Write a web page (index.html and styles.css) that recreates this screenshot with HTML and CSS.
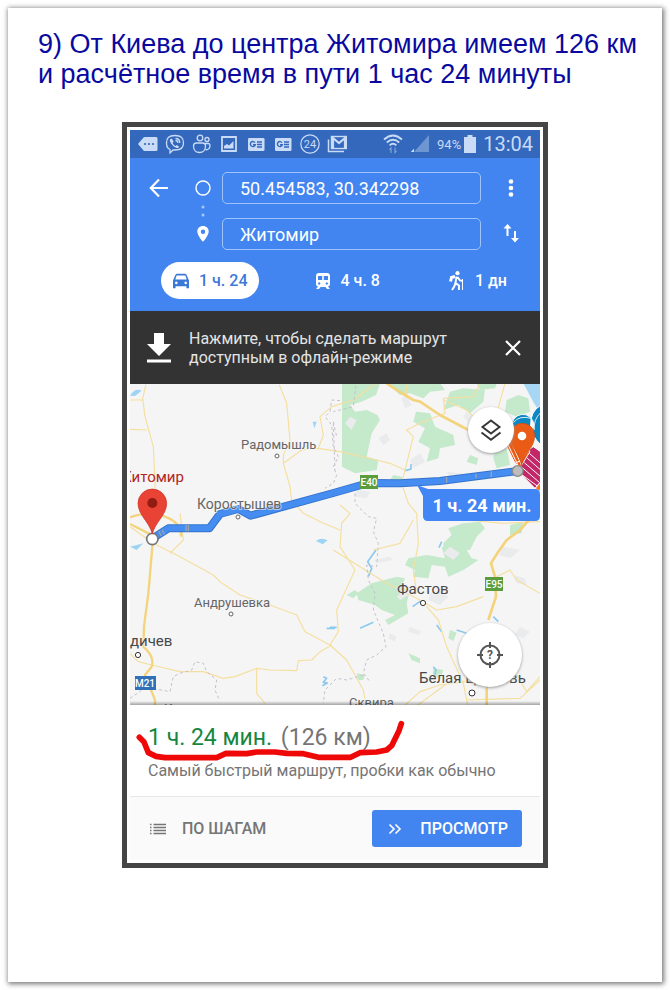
FILE: index.html
```html
<!DOCTYPE html>
<html lang="ru">
<head>
<meta charset="utf-8">
<meta name="viewport" content="width=device-width, initial-scale=1">
<title>Маршрут Киев — Житомир</title>
<link rel="stylesheet" href="styles.css">
</head>
<body>
<main class="sheet">
  <h1 class="title">9) От Киева до центра Житомира имеем 126 км и расчётное время в пути 1 час 24 минуты</h1>

  <section class="phone">
    <div class="status">
      <div class="status-icons">
        <svg class="ico20" viewBox="0 0 20 20"><path d="M0 10 5.500 3.500Q6 3 7 3H18Q19.500 3 19.500 4.500V15.500Q19.500 17 18 17H7Q6 17 5.500 16.500Z" fill="currentColor"/><g fill="#3368bd"><circle cx="7" cy="10" r="1.100"/><circle cx="11" cy="10" r="1.100"/><circle cx="15" cy="10" r="1.100"/></g></svg>
        <svg class="ico20" viewBox="0 0 20 20" fill="none" stroke="currentColor" stroke-width="1.300"><path d="M10 1.500C4 1.500 1.500 3.500 1.500 9c0 3.500 1 5.500 3.500 6.500V19l3-3h2c6 0 8.500-2 8.500-7S16 1.500 10 1.500Z"/><path d="M6 4.700c-1 .5-1.500 1.300-1 2.500 1 3 3.500 5.600 6.800 6.900 1 .3 2-.3 2.300-1.400l-2.300-1.700-1.200 1c-1.300-.5-2.500-1.800-3-3.200l1-1.100L7 4.700Z" fill="currentColor" stroke="none"/><path d="M10.500 4.500c2.500 0 4.300 1.800 4.300 4.500M10.500 6.500c1.500 0 2.400 1 2.400 2.500"/></svg>
        <svg class="ico20" viewBox="0 0 20 20" fill="none" stroke="currentColor" stroke-width="1.300"><circle cx="8" cy="4" r="2.800"/><circle cx="15" cy="5.500" r="2"/><path d="M1.500 12Q1.500 9 4.500 9h6q3 0 3 3c0 4-2.500 6.500-6 6.500S1.500 16 1.500 12ZM12.500 9.500h3.500q2 0 2 2c0 2.500-1.500 4.500-4.500 4.200"/></svg>
        <svg class="ico20" viewBox="0 0 20 20"><path d="M3 3H17V17H3Z" fill="none" stroke="currentColor" stroke-width="1.800"/><path d="M5 14.500V12l3-2 2 1.500L14.500 7v7.500Z" fill="currentColor"/></svg>
        <svg class="ico20" viewBox="0 0 20 20"><rect x="2" y="4" width="16.500" height="13" rx="1.200" fill="currentColor"/><g fill="none" stroke="#3368bd" stroke-width="1.400"><path d="M9 8.700A2.500 2.500 0 1 0 9.300 10.800H7M11 8h5M11 10.500h5M11 13h5"/></g></svg>
        <svg class="ico20" viewBox="0 0 20 20"><rect x="2" y="4" width="16.500" height="13" rx="1.200" fill="currentColor"/><g fill="none" stroke="#3368bd" stroke-width="1.400"><path d="M9 8.700A2.500 2.500 0 1 0 9.300 10.800H7M11 8h5M11 10.500h5M11 13h5"/></g></svg>
        <svg class="ico20" viewBox="0 0 20 20"><circle cx="10" cy="10" r="9.200" fill="none" stroke="currentColor" stroke-width="1.200"/><text class="badge24" x="10" y="14">24</text></svg>
        <svg class="ico20" viewBox="0 0 20 20" fill="none" stroke="currentColor"><path d="M1.500 5.500V17.500H17" stroke-width="1.500"/><rect x="4.500" y="2.500" width="15" height="12" stroke-width="1.400"/><path d="M6 14V4l6 5 6-5v10" stroke-width="2.200"/></svg>
      </div>
      <div class="status-right">
        <svg class="ico20" viewBox="0 0 20 20" fill="none" stroke="currentColor" stroke-width="1.800"><path d="M1 5.500Q10-2.500 19 5.500M3.800 8.500Q10 3 16.200 8.500M6.600 11.300Q10 8.300 13.400 11.300"/><path d="M8 19v-5l-1.500 1.500M12 13.500v5l1.500-1.500" stroke-width="1.200" opacity=".5"/></svg>
        <svg class="ico20" viewBox="0 0 20 20"><path d="M19 1V18H4Z" fill="currentColor" opacity=".4"/><path d="M4 14.500V18H.8Z" fill="currentColor"/></svg>
        <span class="battery-text">94%</span>
        <svg class="battery" viewBox="0 0 12 18"><path d="M3.500 0h5v2H12V18H0V2H3.500Z" fill="currentColor"/></svg>
        <time class="clock">13:04</time>
      </div>
    </div>

    <header class="search">
      <div class="fields">
        <button class="icon-btn" aria-label="Назад"><svg class="ico20" viewBox="0 0 20 20" fill="none" stroke="currentColor" stroke-width="2.200"><path d="M19 10H2.500M10 1.500 1.800 10l8.200 8.500"/></svg></button>
        <label class="mark" for="from" aria-label="Откуда"><svg class="ico16" viewBox="0 0 16 16"><circle cx="8" cy="8" r="7" fill="none" stroke="currentColor" stroke-width="1.400"/></svg></label>
        <input class="field" id="from" type="text" value="50.454583, 30.342298">
        <button class="icon-btn" aria-label="Меню"><svg class="ico20" viewBox="0 0 20 20" fill="currentColor"><circle cx="10" cy="3.500" r="2.300"/><circle cx="10" cy="10" r="2.300"/><circle cx="10" cy="16.500" r="2.300"/></svg></button>
        <svg class="link-dots" viewBox="0 0 4 14" fill="#a9c9fb"><circle cx="2" cy="3" r="1.500"/><circle cx="2" cy="11" r="1.500"/></svg>
        <label class="mark to-mark" for="to" aria-label="Куда"><svg class="ico16" viewBox="0 0 16 16"><path fill-rule="evenodd" d="M8 0C4.500 0 2.300 2.400 2.300 5.600 2.300 9.500 8 16 8 16s5.700-6.500 5.700-10.400C13.700 2.400 11.500 0 8 0Zm0 3.600a2.200 2.200 0 1 1 0 4.400 2.200 2.200 0 0 1 0-4.400Z" fill="currentColor"/></svg></label>
        <input class="field" id="to" type="text" value="Житомир">
        <button class="icon-btn" aria-label="Поменять местами"><svg class="ico20" viewBox="0 0 20 20" fill="none" stroke="currentColor" stroke-width="2"><path d="M6.500 12V3M14 7v9"/><path d="M2.500 4.500 6.500 0l4 4.500ZM10 14l4 4.500 4-4.500Z" fill="currentColor" stroke="none"/></svg></button>
      </div>
      <nav class="modes">
        <button class="mode mode-on"><svg class="ico16" viewBox="0 0 16 16"><path fill-rule="evenodd" d="M2.600 1.500Q3 .8 4 .8h8q1 0 1.400.7L16 7.500v7.700h-2.600v-2H2.600v2H0V7.500ZM3.600 2.500 2.300 6.500h11.400L12.400 2.500ZM3.300 8.600a1.300 1.300 0 1 0 .01 0ZM12.700 8.600a1.300 1.300 0 1 0 .01 0Z" fill="currentColor"/></svg>1 ч. 24</button>
        <button class="mode"><svg class="ico16" viewBox="0 0 16 16"><path fill-rule="evenodd" d="M4 0h8q3 0 3 3v8q0 2-2 2.500L15 16h-3l-1.500-2h-5L4 16H1l2-2.500Q1 13 1 11V3Q1 0 4 0ZM3 3v4h4.200V3ZM8.800 3v4H13V3ZM4.200 9.300a1.200 1.200 0 1 0 .01 0ZM11.800 9.300a1.200 1.200 0 1 0 .01 0Z" fill="currentColor"/></svg>4 ч. 8</button>
        <button class="mode mode-walk"><svg class="walker" viewBox="0 0 16 20" fill="none" stroke="currentColor" stroke-width="1.900"><circle cx="8.500" cy="2.200" r="2.100" fill="currentColor" stroke="none"/><path d="M7.500 5.500 6.500 12l3.500 2.500V19M6.500 11.500 5.500 15l-2.500 4M8.500 6l2.500 3.500 3 .5"/><path d="M6 5.500 2.500 6.500 1.500 10.500" stroke-width="3"/><path d="M13.500 8V19" stroke-width="1"/></svg>1 дн</button>
      </nav>
    </header>

    <div class="offline">
      <svg class="download" viewBox="0 0 26 30" fill="#fff"><path d="M8 0h10v11h7L13 23 1 11h7ZM1 26.500h24v3H1Z"/></svg>
      <p class="offline-text">Нажмите, чтобы сделать маршрут доступным в офлайн-режиме</p>
      <button class="icon-btn" aria-label="Закрыть"><svg class="ico16" viewBox="0 0 16 16" fill="none" stroke="currentColor" stroke-width="2.200"><path d="M1 1 15 15M15 1 1 15"/></svg></button>
    </div>

    <div class="map">
      <svg class="map-art" viewBox="0 0 410 321" preserveAspectRatio="xMidYMid slice" role="img" aria-label="Карта маршрута">
        <rect width="410" height="321" fill="#f5f5f5"/>
        <g transform="translate(200 -4) scale(.33333)">
          <g fill="#c4e9cb">
            <path d="M36 10H150L138 45 95 65 60 75 75 95 110 90 142 105 150 120 125 160 110 230 145 240 140 270 75 280 36 260Z"/>
            <path d="M175 10H330L345 30 300 35 280 55 240 40 210 45Z"/>
            <path d="M258 95 300 100 315 140 370 165 375 195 330 205 325 235 290 245 300 205 265 185 285 145 250 125Z"/>
            <path d="M360 35 400 25 465 30 460 65 420 100 385 75 340 90ZM440 10H500L495 25 450 30ZM530 60 565 45 595 55 600 95 560 110 525 95ZM495 195 530 205 540 255 500 265 490 235ZM420 225 445 235 440 255 410 245ZM190 285 215 290 220 310 180 300Z"/>
            <path d="M340 490 365 465 355 445 400 430 450 425 465 445 440 470 420 510H340ZM540 435 580 425 575 460 540 465Z"/>
            <path d="M225 555 235 535 290 525 345 535 335 500 410 510 425 535 445 540 400 570 355 590 345 560 305 555 295 595 250 590 255 570Z"/>
            <path d="M80 640 125 610 200 590 225 595 215 620 240 630 230 670 235 700 175 735 165 720 195 705 155 690 135 675 85 660ZM360 750l20 8-10 25-15-8ZM235 820l35 15v15l-25-10ZM310 865l30 5-8 25-25-5ZM80 880l25 5-5 15H85ZM50 645l25-15 10 10-15 15Z"/>
          </g>
          <path d="M580 10H632V100L612 70Z" fill="#a8d7f5"/>
          <g fill="#eaebed"><path d="M145 175l25-15 10 20-20 15ZM215 55l15-10 15 30-20 10ZM350 275l45 5 20 25-50-5ZM460 135l25 15-10 20-20-10ZM80 330l40 5-10 20-35-5ZM400 110l10-15 20 20-10 20ZM520 500l50 10-30 25-35-10ZM300 640l35-10 20 20-25 25-35-15ZM180 760l20 10-5 15-20-10ZM240 740l35 15-10 10-30-10ZM570 740l30 15-20 20-25-10ZM200 650l30-25 15 15-35 20ZM130 540l50-10 10 10-50 10ZM360 500l-20 20 30 20 20-20ZM60 110l20 10-15 30-20-20ZM240 240l30-20 15 25-35 20ZM550 585l35 10 5 20-30-5Z"/></g>
          <g fill="none" stroke="#8cc9ee" stroke-width="5"><path d="M225 272l18-5v-15M335 485l-8 18M115 590l10-25-12-20 25-35M90 745l40-18M320 735l15 20M248 680l25-18M380 750l30 10M490 710l15 15M310 860l8 10-5 20M0 742h20"/></g>
        </g>
        <g transform="translate(-10 -4) scale(.33333)" fill="none" stroke-linejoin="round">
          <path d="M30 47q15-25 35-15L45 48ZM588 483q15-12 35-2l-15 12ZM30 500l40-10-20 20ZM578 125h12l-7 20Z" fill="#9fd3f3"/>
          <g stroke="#f5df9f" stroke-width="3.500">
            <path d="M78 14 68 55 75 110 100 200 105 310V410M30 60H68M30 148 80 150M478 14 500 70 510 180 490 225 490 250 510 320 515 360 550 400 610 430 660 450M490 250 545 210 595 205 610 165 600 110 635 80 700 60 780 0M595 205 660 215 770 240 810 250 855 270M30 440 100 490M180 400 190 480 150 520M230 510"/>
            <path d="M100 490 170 525 280 585 300 605 360 645 450 675 530 705 555 755 630 795 680 840 730 930 740 985M630 795 655 755 650 690 705 570 660 500 665 430 690 400 660 375M30 820 55 845 95 855 180 875 250 875 310 895 345 890 410 865 450 870 530 872 535 842 575 840 600 815 635 795M410 865 410 940 435 970"/>
            <path d="M860 10 860 45M1080 10 1060 50 970 55 975 100 900 130 860 150 880 170 860 250 845 310 865 370 890 400 895 490 880 570 890 640M970 60 1040 90 1060 110M1155 10 1130 100M1040 420 1150 430 1260 425M880 420 840 490 760 510M640 510 720 560 800 610 900 660M900 660 950 690 1010 680 1090 650M920 680 955 720 980 800 1030 910 1045 985M1130 590 1170 570 1190 600 1260 640M1260 890 1220 935 1190 885M850 980 900 935 960 915 1035 905M880 985 975 915M1040 960 1200 955 1260 900"/>
          </g>
          <g stroke="#f4d37d" stroke-width="8">
            <path d="M30 412Q90 390 140 412 185 430 183 470M30 432 105 470 97 500 85 640 72 740 70 800Q105 830 95 860L75 885 105 960V985" stroke-width="7"/>
            <path d="M800 10 830 30 880 60 900 65 960 105 1045 150"/>
            <path d="M1235 410 1200 450 1160 480 1135 515 1113 550 1125 590 1128 650 1105 720M1100 915V985"/>
          </g>
          <g stroke="#c5c0cc" stroke-width="3" stroke-dasharray="9 8">
            <path d="M660 62 635 60 630 95 615 110 635 135 640 200 655 230 640 260 650 285 640 310 615 325M710 0 700 80 640 95M640 125 650 170M640 130 645 270M705 340 705 370 745 410 770 415 760 455 775 490 770 560 740 555 745 600 765 640 760 690 790 760 798 800 770 825 740 840 730 880 750 905M730 885 680 900 650 895 615 930 610 970M30 955 60 935 70 920 150 935 160 890 180 880 215 870 225 845 250 850 260 875 290 900 285 930 298 960"/>
          </g>
          <path d="M620 745h25M610 890l10 5-10 12 12 2-15 8" stroke="#8cc9ee" stroke-width="5"/>
        </g>

        <g class="place">
          <text class="t13" x="111" y="65">Радомышль</text>
          <text class="t13" x="64" y="223">Андрушевка</text>
          <text class="t13" x="219" y="323">Сквира</text>
          <text class="t13" x="34" y="329">Кожанка</text>
        </g>
        <g transform="translate(-10 -4) scale(.33333)" fill="none" stroke-linejoin="round">
          <path d="M97 476 145 445H268L300 402 355 387 392 407 640 339 745 309 840 310 960 303 1195 273" stroke="#3573cc" stroke-width="24"/>
          <path d="M97 476 145 445H268L300 402 355 387 392 407 640 339 745 309 840 310 960 303 1195 273" stroke="#468df2" stroke-width="18"/>
          <path d="M116 453l8 15M126 449l7 14M198 435v19M205 435v19M980 291v17M1114 274v17M1068 282v12" stroke="#9aa4ad" stroke-width="4"/>
          <circle cx="97" cy="477" r="17" fill="#fff" stroke="#777" stroke-width="5"/>
          <path d="M97 462C88 425 54 405 54 370a43 43 0 0 1 86 0C140 405 106 425 97 462Z" fill="#e84335" stroke="#c93427" stroke-width="2"/><circle cx="97" cy="369" r="15" fill="#911c12"/>
        </g>
        <g class="place place-big">
          <text class="t14 place-soft" x="67" y="125">Коростышев</text>
          <text class="t15" x="267" y="210">Фастов</text>
          <text class="t15" x="0" y="262">дичев</text>
          <text class="t15" x="289" y="299">Белая Церковь</text>
        </g>
        <text class="city" x="-12" y="98">Житомир</text>
        <g fill="#fff" stroke="#666" stroke-width="1"><circle cx="147" cy="72" r="2"/><circle cx="108" cy="133" r="2"/><circle cx="101" cy="230" r="2"/><circle cx="293" cy="219" r="2.600" stroke="#333"/><circle cx="342" cy="309" r="3" stroke="#333"/><circle cx="8" cy="271" r="2.600" stroke="#333"/></g>
        <rect x="230" y="91" width="18" height="14" fill="#5b9c3d"/><text class="road" x="239" y="102">E40</text>
        <rect x="355" y="193" width="18" height="14" fill="#5b9c3d"/><text class="road" x="364" y="204">E95</text>
        <rect x="5" y="292" width="21" height="14" fill="#3271b8"/><text class="road" x="15" y="303">M21</text>

        <g transform="translate(200 -4) scale(.33333)" stroke="#fff" stroke-width="3">
          <path d="M545 144A33 35 0 0 1 612 134L600 184H550ZM632 76Q600 94 602 139 605 169 632 194Z" fill="#0b87c4"/>
          <path d="M550 128Q568 104 606 116M613 150q-3-32 19-52" fill="none" stroke-width="2.500"/>
          <path d="M615 325 632 305V335Z" fill="#f47b20"/>
          <path d="M565 275Q575 215 610 200L632 215V305L615 325Z" fill="#c22768"/>
          <path d="M570 280 622 318M577 263 628 307M583 248 632 290M590 233 632 270M598 220 632 250" fill="none"/>
          <path d="M528 195 545 165 600 215 570 263 555 250Z" fill="#ea5b16"/>
          <path d="M533 192 567 262M541 180 574 255M600 208 575 240 555 250" fill="none"/>
          <path d="M575 258C570 220 540 200 540 168a37 37 0 0 1 74-2C614 205 580 220 575 258Z" fill="#ea5b16" stroke="#c94c11" stroke-width="2"/>
          <circle cx="576" cy="168" r="13" fill="#fff" stroke="none"/>
          <circle cx="563" cy="273" r="16" fill="#bdbdbd" stroke="#8b8b8b" stroke-width="4"/>
        </g>
        <path d="M287 101 298 105H405Q410 105 410 110V132Q410 137 405 137H298Q293 137 293 132V112Z" fill="#4285f4"/>
        <text class="eta" x="352" y="128">1 ч. 24 мин.</text>
      </svg>
      <button class="round layers" aria-label="Слои"><svg class="layers-ico" viewBox="0 0 22 22" fill="none" stroke="currentColor" stroke-width="2"><path d="M11 1.500 19.500 8 11 14.500 2.500 8ZM1.500 13.500 11 20.700 20.500 13.500"/></svg></button>
      <button class="round locate" aria-label="Моё местоположение"><svg class="locate-ico" viewBox="0 0 26 26" fill="none" stroke="currentColor" stroke-width="2"><circle cx="13" cy="13" r="9.500"/><path d="M13 0V6M13 20v6M0 13H6M20 13h6"/><text class="question" x="13" y="17">?</text></svg></button>
    </div>

    <section class="summary">
      <h2 class="total"><span class="time">1 ч. 24 мин.</span> <span class="distance">(126 км)</span></h2>
      <p class="note">Самый быстрый маршрут, пробки как обычно</p>
      <svg class="marker" viewBox="0 0 280 60" fill="none" stroke="#ee0808" stroke-linecap="round" stroke-linejoin="round"><g transform="translate(-10 -5) scale(.33333)" stroke-width="17"><path d="M58 112 72 126 85 158 108 169 135 173H290L318 160 380 161 410 156H465L500 160 550 161 595 172H692L720 158 770 156 800 150 815 137 837 92 844 71"/></g></svg>
    </section>

    <footer class="actions">
      <button class="steps"><svg class="ico16" viewBox="0 0 16 16" fill="none" stroke="currentColor" stroke-width="1.400"><path d="M0 3.500h1.500M3.500 3.500H16M0 6.500h1.500M3.500 6.500H16M0 9.500h1.500M3.500 9.500H16M0 12.500h1.500M3.500 12.500H16"/></svg>ПО ШАГАМ</button>
      <button class="preview"><svg class="chevrons" viewBox="0 0 14 12" fill="none" stroke="currentColor" stroke-width="1.600"><path d="M1.500 1.500 6 6 1.500 10.500M7.500 1.500 12 6 7.500 10.500"/></svg>ПРОСМОТР</button>
    </footer>
  </section>
</main>
</body>
</html>
```

FILE: styles.css
```css
* { box-sizing: border-box; }
body { margin: 0; padding: 8px; background: #fff; font-family: Roboto, "Noto Sans", sans-serif; }
h1, h2, p { margin: 0; font-weight: 400; }
button { border: 0; padding: 0; background: none; color: inherit; font: inherit; cursor: pointer; }
svg { display: block; flex: none; }

.sheet { min-height: calc(100vh - 16px); padding: 21px 0 40px; background: #fff; box-shadow: 1px 1px 5px 1px #777; }
.title { padding: 0 20px 0 30px; color: #0909a0; font-family: "Liberation Sans", Arial, sans-serif; font-size: 27px; line-height: 30px; }
.phone { max-width: 426px; margin: 33px auto 0; border: 5px solid #454545; padding: 3px; background: #fff; }

.ico20 { width: 20px; height: 20px; }
.ico16 { width: 16px; height: 16px; }

.status { display: flex; justify-content: space-between; align-items: center; height: 28px; padding: 0 7px 0 8px; background: #3368bd; color: #c9dbf6; }
.status-icons { display: flex; gap: 7px; }
.status-right { display: flex; align-items: center; gap: 7px; }
.badge24 { font-size: 11px; text-anchor: middle; fill: currentColor; }
.battery { width: 12px; height: 18px; margin-left: -4px; }
.battery-text { font-size: 13px; }
.clock { font-size: 20px; line-height: 28px; }

.search { padding: 14px 17px 12px; background: #4285f0; color: #fff; }
.fields { display: grid; grid-template-columns: 24px 40px 1fr 32px; align-items: center; }
.fields .icon-btn:nth-of-type(n+2) { justify-self: end; }
.icon-btn { display: grid; place-items: center; width: 24px; height: 24px; }
.mark { justify-self: end; }
.link-dots { grid-column: 2; justify-self: end; width: 4px; height: 14px; margin-right: 6px; }
.to-mark { grid-column: 2; }
.field { min-width: 0; height: 32px; margin: 0 10px 0 11px; border: 1px solid #9fc4fb; border-radius: 5px; padding: 0 17px; background: transparent; color: #fff; font: 18px/30px Roboto, sans-serif; }
.modes { display: flex; justify-content: space-between; margin-top: 12px; padding: 0 16px 0 14px; }
.mode { display: flex; align-items: center; gap: 10px; height: 37px; color: #fff; font-size: 16px; font-weight: 500; }
.mode-on { padding: 0 12px; border-radius: 19px; background: #fff; color: #3c78d8; }
.mode-walk { margin-left: 14px; }
.walker { width: 16px; height: 20px; }

.offline { display: flex; align-items: center; height: 73px; padding: 0 15px 0 16px; background: #333; color: #fff; }
.download { width: 26px; height: 30px; }
.offline-text { flex: 1; margin: 0 40px 0 17px; color: #e4e4e4; font-size: 16px; line-height: 19px; }

.map { position: relative; height: 321px; overflow: hidden; }
.map-art { width: 100%; height: 100%; }
.map::after { content: ""; position: absolute; inset: auto 0 0; height: 4px; background: linear-gradient(transparent, #0005); }
.place { fill: #666; stroke: #f5f5f5; stroke-width: 2px; paint-order: stroke; }
.place-big { fill: #484848; stroke-opacity: .6; }
.place-soft { fill: #666; }
.t13 { font-size: 13px; }
.t14 { font-size: 14px; }
.t15 { font-size: 15px; }
.city { fill: #b3261e; font-size: 15px; }
.road { fill: #fff; font-size: 10px; font-weight: 500; text-anchor: middle; }
.eta { fill: #fff; font-size: 18px; font-weight: 700; text-anchor: middle; }
.round { position: absolute; display: grid; place-items: center; border-radius: 50%; background: #fff; color: #383838; box-shadow: 0 1px 3px #999; }
.layers { top: 23px; right: 26px; width: 46px; height: 46px; }
.layers-ico { width: 22px; height: 22px; }
.locate { right: 18px; bottom: 18px; width: 64px; height: 64px; color: #555; }
.locate-ico { width: 26px; height: 26px; }
.question { fill: currentColor; stroke: none; font-size: 12px; font-weight: 700; text-anchor: middle; }

.summary { position: relative; height: 91px; padding: 18px 18px 0; background: #fff; }
.total { font-size: 23px; line-height: 30px; white-space: nowrap; }
.time { color: #16853f; }
.distance { margin-left: 3px; color: #757575; }
.note { margin-top: 8px; color: #757575; font-size: 16px; line-height: 20px; white-space: nowrap; }
.marker { position: absolute; top: 0; left: 0; width: 280px; height: 60px; }
.actions { display: flex; justify-content: space-between; align-items: center; height: 64px; border-top: 1px solid #e8e8e8; padding: 0 18px 0 20px; background: #fafafa; }
.steps { display: flex; align-items: center; gap: 16px; color: #757575; font-size: 16px; font-weight: 500; }
.preview { display: flex; align-items: center; gap: 18px; height: 37px; border-radius: 3px; padding: 0 14px 0 16px; background: #4285f0; color: #fff; font-size: 16px; font-weight: 500; }
.chevrons { width: 14px; height: 12px; }
```
